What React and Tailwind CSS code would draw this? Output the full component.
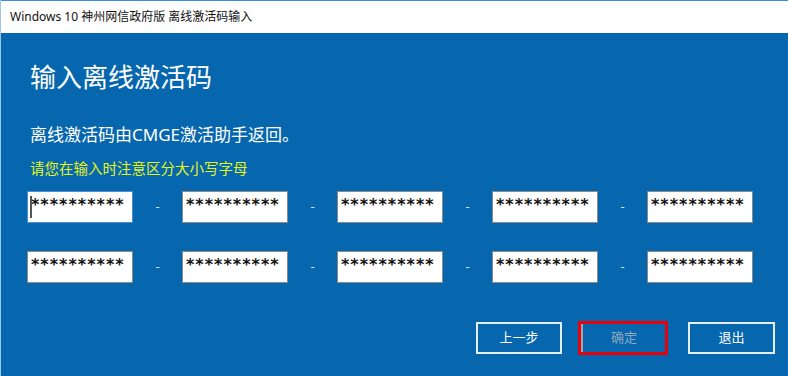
import React from "react";

const font = { fontFamily: '"Noto Sans", "Noto Sans CJK SC", sans-serif' };

function Box({ focused }) {
  return (
    <div
      className={`relative w-[106px] h-[32px] bg-white border ${focused ? "border-[#4a8fd6]" : "border-[#8a8a8a]"} flex items-start pt-[3px] pl-[3px]`}
    >
      {focused && <div className="absolute left-[2px] top-[4px] w-[2px] h-[22px] bg-[#555]" />}
      <span className="text-[16px] font-bold text-[#111] tracking-[1px] leading-[20px]" style={{ fontFamily: '"DejaVu Sans", sans-serif' }}>
        **********
      </span>
    </div>
  );
}

function Row({ first }) {
  return (
    <div className="flex items-center">
      {[0, 1, 2, 3, 4].map((i) => (
        <React.Fragment key={i}>
          {i > 0 && (
            <div className="w-[49px] flex justify-center text-[#cfe2f3] text-[13px]">-</div>
          )}
          <Box focused={first && i === 0} />
        </React.Fragment>
      ))}
    </div>
  );
}

export default function App() {
  return (
    <div className="w-[788px] h-[376px] flex flex-col bg-[#0767ae] border-l border-[#9cc6ea] overflow-hidden" style={font}>
      <div className="h-[33px] bg-white border-t border-[#3a8fdc] flex items-center pl-[9px] text-[12px] text-[#111]">
        Windows 10 神州网信政府版 离线激活码输入
      </div>
      <div className="flex flex-col pl-[29px] pt-[27px]">
        <div className="text-[26px] text-white leading-[34px]">输入离线激活码</div>
        <div className="text-[17px] text-white mt-[29px] leading-[24px]">离线激活码由CMGE激活助手返回。</div>
        <div className="text-[14.5px] text-[#e4f51a] mt-[11px] leading-[20px]">请您在输入时注意区分大小写字母</div>
      </div>
      <div className="flex flex-col pl-[26px] mt-[13px] gap-[28px]">
        <Row first />
        <Row />
      </div>
      <div className="flex justify-end items-center pr-[13px] mt-[38px]">
        <button className="w-[86px] h-[32px] border-2 border-[#e6eef6] text-white text-[13px]">上一步</button>
        <button className="ml-[16px] w-[90px] h-[34px] border-[3px] border-[#e8000b] text-[#8fa9bf] text-[13px]">
          <span className="flex h-full items-center justify-center border-l-2 border-[#9aa7b0]">确定</span>
        </button>
        <button className="ml-[20px] w-[87px] h-[32px] border-2 border-[#e6eef6] text-white text-[13px]">退出</button>
      </div>
    </div>
  );
}
